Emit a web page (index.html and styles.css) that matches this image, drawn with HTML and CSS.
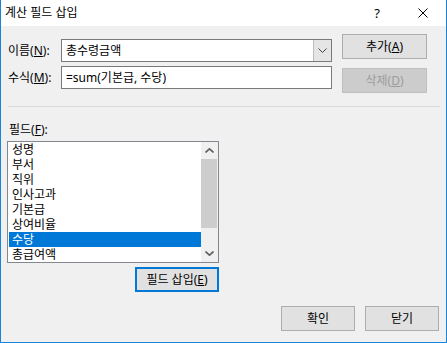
FILE: index.html
```html
<!DOCTYPE html>
<html lang="ko">
<head>
    <meta charset="UTF-8">
    <title>계산 필드 삽입</title>
    <link rel="stylesheet" href="styles.css">
</head>
<body>
    <div class="window">
        <div class="titlebar">
            <span class="title">계산 필드 삽입</span>
            <span class="help">?</span>
            <span class="close">
                <svg width="10" height="10" viewBox="0 0 10 10"><path d="M0.5 0.5 L9.5 9.5 M9.5 0.5 L0.5 9.5" stroke="#000" stroke-width="1"/></svg>
            </span>
        </div>

        <div class="content">
            <div class="top">
                <div class="fields">
                    <div class="row">
                        <label>이름(<u>N</u>):</label>
                        <div class="combo">
                            <span class="value">총수령금액</span>
                            <span class="drop">
                                <svg width="9" height="5" viewBox="0 0 9 5"><path d="M0.5 0.5 L4.5 4.5 L8.5 0.5" fill="none" stroke="#444" stroke-width="1"/></svg>
                            </span>
                        </div>
                    </div>
                    <div class="row">
                        <label>수식(<u>M</u>):</label>
                        <div class="input">=sum(기본급, 수당)</div>
                    </div>
                </div>
                <div class="side">
                    <button class="btn">추가(<u>A</u>)</button>
                    <button class="btn disabled">삭제(<u>D</u>)</button>
                </div>
            </div>

            <div class="separator"></div>

            <label class="list-label">필드(<u>F</u>):</label>
            <div class="listbox">
                <ul class="items">
                    <li>성명</li>
                    <li>부서</li>
                    <li>직위</li>
                    <li>인사고과</li>
                    <li>기본급</li>
                    <li>상여비율</li>
                    <li class="selected">수당</li>
                    <li>총급여액</li>
                </ul>
                <div class="scrollbar">
                    <span class="arrow">
                        <svg width="9" height="5" viewBox="0 0 9 5"><path d="M0.5 4.5 L4.5 0.8 L8.5 4.5" fill="none" stroke="#606060" stroke-width="1.6"/></svg>
                    </span>
                    <div class="track"><div class="thumb"></div></div>
                    <span class="arrow">
                        <svg width="9" height="5" viewBox="0 0 9 5"><path d="M0.5 0.5 L4.5 4.2 L8.5 0.5" fill="none" stroke="#606060" stroke-width="1.6"/></svg>
                    </span>
                </div>
            </div>
            <div class="insert-row">
                <button class="btn insert">필드 삽입(<u>E</u>)</button>
            </div>

            <div class="footer">
                <button class="btn footer-btn">확인</button>
                <button class="btn footer-btn">닫기</button>
            </div>
        </div>
    </div>
</body>
</html>
```

FILE: styles.css
```css
body {
    margin: 0;
    font-family: "Noto Sans", "Noto Sans CJK KR", sans-serif;
    font-size: 12px;
    color: #000;
    background-color: #f0f0f0;
}

.window {
    width: 445px;
    height: 342px;
    border: 1px solid #1883d7;
    border-top: none;
    display: flex;
    flex-direction: column;
    background-color: #f0f0f0;
}

.titlebar {
    height: 26px;
    background-color: #fff;
    display: flex;
    align-items: center;
}

.title {
    margin-left: 4px;
    margin-right: auto;
    line-height: 16px;
}

.help {
    width: 46px;
    text-align: center;
    font-size: 13px;
    margin-right: 0;
}

.close {
    width: 46px;
    display: flex;
    justify-content: center;
    margin-right: 0;
}

.content {
    flex: 1;
    padding: 0 6px 0 6px;
    display: flex;
    flex-direction: column;
}

.top {
    display: flex;
}

.fields {
    padding-top: 13px;
    display: flex;
    flex-direction: column;
    gap: 4px;
}

.row {
    display: flex;
    align-items: center;
}

.row label {
    width: 53px;
    padding-left: 1px;
    line-height: 16px;
}

.combo, .input {
    width: 269px;
    height: 21px;
    border: 1px solid #7a7a7a;
    background-color: #fff;
    display: flex;
    align-items: center;
    line-height: 16px;
}

.combo .value, .input {
    padding-left: 4px;
}

.input {
    width: 265px;
}

.combo .value {
    flex: 1;
}

.drop {
    width: 17px;
    height: 21px;
    background-color: #e5e5e5;
    border-left: 1px solid #bcbcbc;
    display: flex;
    align-items: center;
    justify-content: center;
}

.side {
    margin-left: 10px;
    padding-top: 8px;
    display: flex;
    flex-direction: column;
    gap: 9px;
}

.btn {
    font-family: inherit;
    font-size: 12px;
    line-height: 16px;
    background-color: #e1e1e1;
    border: 1px solid #adadad;
    color: #000;
    padding: 0;
    margin: 0;
}

.side .btn {
    width: 85px;
    height: 25px;
}

.btn.disabled {
    background-color: #cccccc;
    border-color: #bfbfbf;
    color: #9c9c9c;
}

.separator {
    margin: 13px 0 0 1px;
    width: 432px;
    height: 1px;
    background-color: #d9d9d9;
}

.list-label {
    margin: 15px 0 0 2px;
    line-height: 16px;
}

.listbox {
    margin-top: 3px;
    width: 210px;
    height: 120px;
    border: 1px solid #828790;
    background-color: #fff;
    display: flex;
}

.items {
    list-style: none;
    margin: 0;
    padding: 0 0 0 1px;
    flex: 1;
}

.items li {
    height: 15px;
    line-height: 15px;
    padding-left: 3px;
}

.items li.selected {
    background-color: #0078d7;
    color: #fff;
}

.scrollbar {
    width: 17px;
    background-color: #f0f0f0;
    display: flex;
    flex-direction: column;
}

.arrow {
    height: 17px;
    display: flex;
    align-items: center;
    justify-content: center;
}

.track {
    flex: 1;
}

.thumb {
    margin: 0 1px 0 0;
    height: 69px;
    background-color: #cdcdcd;
}

.insert-row {
    margin-top: 4px;
    padding-left: 128px;
}

.btn.insert {
    width: 84px;
    height: 25px;
    border: 2px solid #0078d7;
}

.footer {
    margin-top: 14px;
    display: flex;
    justify-content: flex-end;
    gap: 10px;
    padding-right: 1px;
}

.footer-btn {
    width: 74px;
    height: 25px;
}
```
